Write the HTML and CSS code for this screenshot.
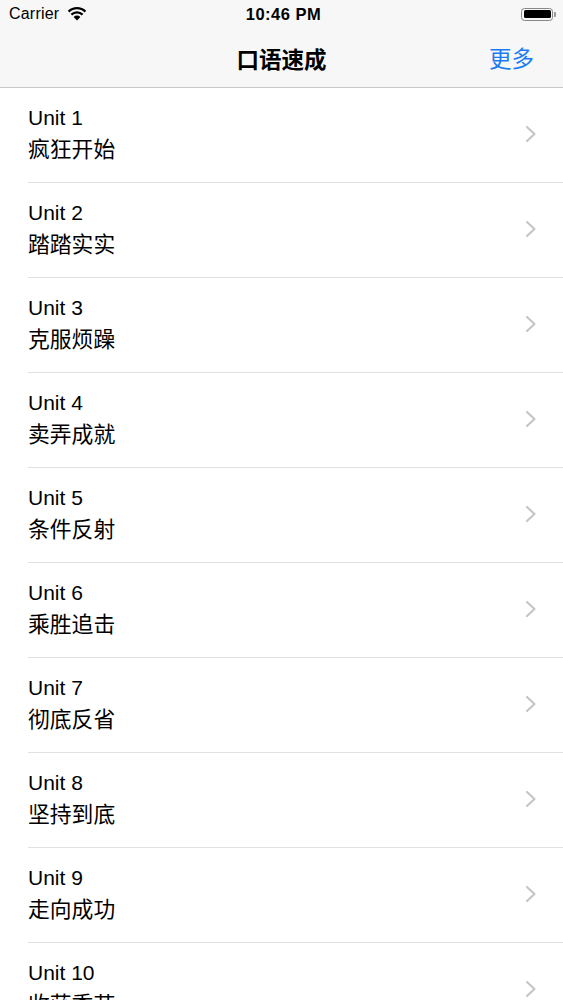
FILE: index.html
```html
<!DOCTYPE html>
<html lang="zh">
<head>
<meta charset="utf-8">
<title>口语速成</title>
<link rel="stylesheet" href="styles.css">
</head>
<body>
<div class="header">
  <div class="status">
    <div class="status-left">
      <span class="carrier">Carrier</span>
      <svg class="wifi" width="20" height="14" viewBox="0 0 20 14">
        <path d="M10 13.5 L6.6 9.9 A4.9 4.9 0 0 1 13.4 9.9 Z" fill="#000"/>
        <path d="M4.4 7.6 A8 8 0 0 1 15.6 7.6" fill="none" stroke="#000" stroke-width="2.2"/>
        <path d="M1.6 4.6 A12 12 0 0 1 18.4 4.6" fill="none" stroke="#000" stroke-width="2.2"/>
      </svg>
    </div>
    <div class="time">10:46 PM</div>
    <div class="status-right">
      <div class="battery"><div class="battery-fill"></div></div>
      <div class="battery-tip"></div>
    </div>
  </div>
  <div class="nav">
    <div class="nav-title">口语速成</div>
    <div class="nav-action">更多</div>
  </div>
</div>
<ul class="list">
  <li class="row"><div class="texts"><div class="unit">Unit 1</div><div class="name">疯狂开始</div></div><svg class="chev" width="12" height="18" viewBox="0 0 12 18"><path d="M2 2 L9.5 9 L2 16" fill="none" stroke="#c4c4c9" stroke-width="2.1" stroke-linecap="round" stroke-linejoin="round"/></svg></li>
  <li class="row"><div class="texts"><div class="unit">Unit 2</div><div class="name">踏踏实实</div></div><svg class="chev" width="12" height="18" viewBox="0 0 12 18"><path d="M2 2 L9.5 9 L2 16" fill="none" stroke="#c4c4c9" stroke-width="2.1" stroke-linecap="round" stroke-linejoin="round"/></svg></li>
  <li class="row"><div class="texts"><div class="unit">Unit 3</div><div class="name">克服烦躁</div></div><svg class="chev" width="12" height="18" viewBox="0 0 12 18"><path d="M2 2 L9.5 9 L2 16" fill="none" stroke="#c4c4c9" stroke-width="2.1" stroke-linecap="round" stroke-linejoin="round"/></svg></li>
  <li class="row"><div class="texts"><div class="unit">Unit 4</div><div class="name">卖弄成就</div></div><svg class="chev" width="12" height="18" viewBox="0 0 12 18"><path d="M2 2 L9.5 9 L2 16" fill="none" stroke="#c4c4c9" stroke-width="2.1" stroke-linecap="round" stroke-linejoin="round"/></svg></li>
  <li class="row"><div class="texts"><div class="unit">Unit 5</div><div class="name">条件反射</div></div><svg class="chev" width="12" height="18" viewBox="0 0 12 18"><path d="M2 2 L9.5 9 L2 16" fill="none" stroke="#c4c4c9" stroke-width="2.1" stroke-linecap="round" stroke-linejoin="round"/></svg></li>
  <li class="row"><div class="texts"><div class="unit">Unit 6</div><div class="name">乘胜追击</div></div><svg class="chev" width="12" height="18" viewBox="0 0 12 18"><path d="M2 2 L9.5 9 L2 16" fill="none" stroke="#c4c4c9" stroke-width="2.1" stroke-linecap="round" stroke-linejoin="round"/></svg></li>
  <li class="row"><div class="texts"><div class="unit">Unit 7</div><div class="name">彻底反省</div></div><svg class="chev" width="12" height="18" viewBox="0 0 12 18"><path d="M2 2 L9.5 9 L2 16" fill="none" stroke="#c4c4c9" stroke-width="2.1" stroke-linecap="round" stroke-linejoin="round"/></svg></li>
  <li class="row"><div class="texts"><div class="unit">Unit 8</div><div class="name">坚持到底</div></div><svg class="chev" width="12" height="18" viewBox="0 0 12 18"><path d="M2 2 L9.5 9 L2 16" fill="none" stroke="#c4c4c9" stroke-width="2.1" stroke-linecap="round" stroke-linejoin="round"/></svg></li>
  <li class="row"><div class="texts"><div class="unit">Unit 9</div><div class="name">走向成功</div></div><svg class="chev" width="12" height="18" viewBox="0 0 12 18"><path d="M2 2 L9.5 9 L2 16" fill="none" stroke="#c4c4c9" stroke-width="2.1" stroke-linecap="round" stroke-linejoin="round"/></svg></li>
  <li class="row"><div class="texts"><div class="unit">Unit 10</div><div class="name">收获季节</div></div><svg class="chev" width="12" height="18" viewBox="0 0 12 18"><path d="M2 2 L9.5 9 L2 16" fill="none" stroke="#c4c4c9" stroke-width="2.1" stroke-linecap="round" stroke-linejoin="round"/></svg></li>
</ul>
</body>
</html>
```
FILE: styles.css
```css
html, body {
  margin: 0;
  padding: 0;
  background: #ffffff;
  font-family: "Liberation Sans", "Noto Sans CJK SC", sans-serif;
  color: #000;
}
.header {
  background: #f7f7f7;
  border-bottom: 1px solid #c9c9cc;
  height: 88px;
  box-sizing: border-box;
}
.status {
  height: 28px;
  display: flex;
  align-items: center;
  justify-content: space-between;
  padding: 0 7px 0 9px;
  position: relative;
}
.status-left {
  display: flex;
  align-items: center;
  gap: 8px;
}
.carrier {
  font-size: 16px;
  letter-spacing: 0.2px;
}
.wifi {
  display: block;
  margin-top: -1px;
}
.time {
  position: absolute;
  left: 0;
  right: 0;
  text-align: center;
  font-size: 16.5px;
  font-weight: bold;
  letter-spacing: 0.5px;
  padding-left: 4px;
  pointer-events: none;
}
.status-right {
  display: flex;
  align-items: center;
}
.battery {
  width: 32px;
  height: 13px;
  box-sizing: border-box;
  border: 1.2px solid #888;
  border-radius: 3.5px;
  padding: 1.5px;
}
.battery-fill {
  width: 100%;
  height: 100%;
  background: #000;
  border-radius: 1.5px;
}
.battery-tip {
  width: 2px;
  height: 5px;
  background: #999;
  border-radius: 0 1px 1px 0;
  margin-left: 1px;
}
.nav {
  height: 59px;
  display: flex;
  align-items: center;
  justify-content: flex-end;
  padding: 0 29px 0 0;
  position: relative;
}
.nav-title {
  position: absolute;
  left: 0;
  right: 0;
  text-align: center;
  font-size: 22.5px;
  font-weight: bold;
  pointer-events: none;
}
.nav-action {
  font-size: 22.5px;
  color: #1a7cf5;
  margin-top: -2px;
}
.list {
  list-style: none;
  margin: 0;
  padding: 0 0 0 28px;
}
.row {
  display: flex;
  align-items: center;
  justify-content: space-between;
  height: 95px;
  box-sizing: border-box;
  border-bottom: 1px solid #e1e1e3;
  padding: 0 26px 0 0;
}
.texts {
  display: flex;
  flex-direction: column;
  margin-top: -4px;
}
.unit, .name {
  font-size: 21px;
  line-height: 30px;
}
.name {
  font-family: "Noto Sans CJK SC", sans-serif;
  font-size: 21.8px;
  font-weight: 400;
}
.chev {
  display: block;
  margin-top: -3px;
}
```
